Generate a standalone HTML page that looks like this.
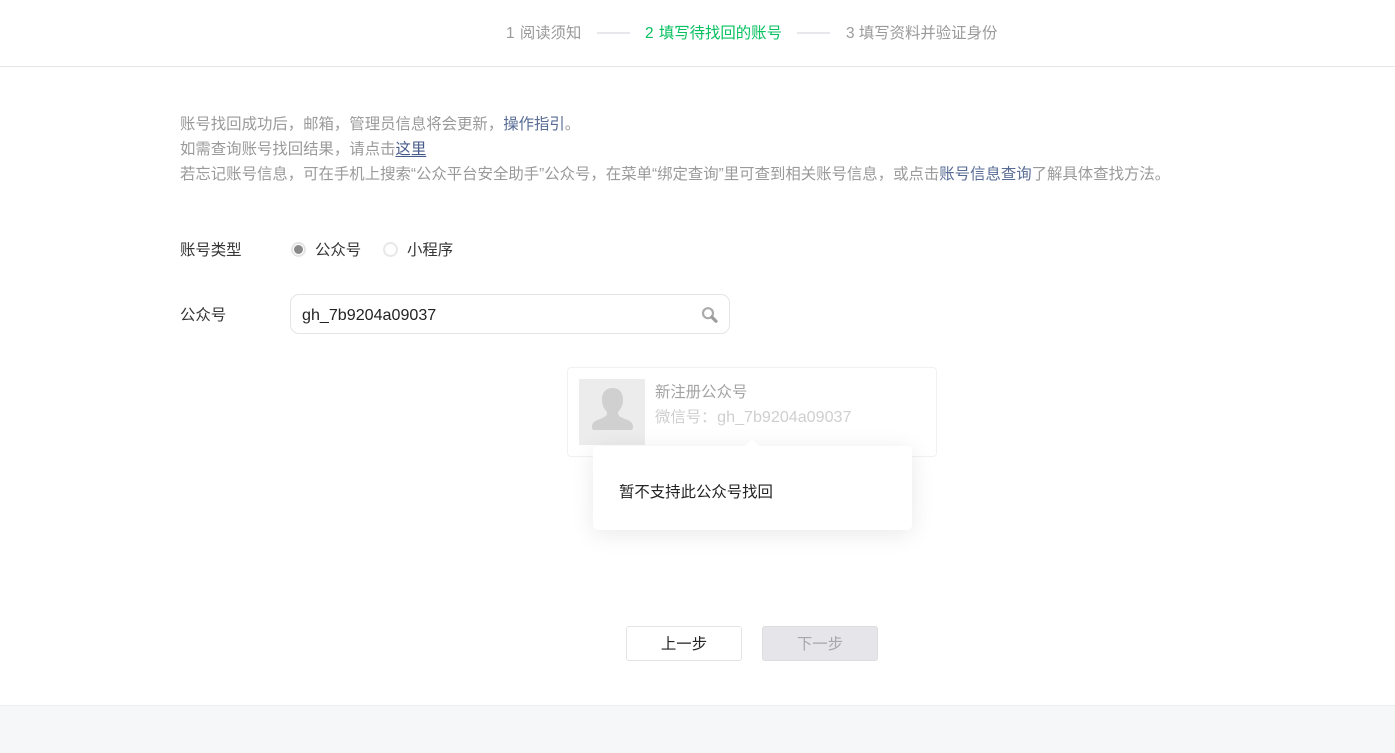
<!DOCTYPE html>
<html lang="zh-CN">
<head>
<meta charset="utf-8">
<title>账号找回</title>
<style>
html,body{margin:0;padding:0;background:#fff}
body{width:1395px;height:753px;position:relative;overflow:hidden;font-family:"Liberation Sans","Noto Sans CJK SC",sans-serif;font-size:15.4px;color:#353535}
.a{position:absolute;white-space:nowrap}
.t{line-height:25px;height:25px}
a{color:#576b95;text-decoration:none}
.g{color:#9a9a9a}
</style>
</head>
<body>
<div class="a" style="left:0;top:66px;width:1395px;height:1px;background:#e7e7eb"></div>
<div class="a t" style="left:506px;top:21px;color:#9a9a9a;word-spacing:1px">1 阅读须知</div>
<div class="a" style="left:597px;top:32px;width:33px;height:2px;background:#e6e8eb"></div>
<div class="a t" style="left:645px;top:21px;color:#07c160;word-spacing:1px">2 填写待找回的账号</div>
<div class="a" style="left:797px;top:32px;width:33px;height:2px;background:#e6e8eb"></div>
<div class="a t" style="left:846px;top:21px;color:#9a9a9a">3 填写资料并验证身份</div>

<div class="a t g" style="left:180px;top:112px">账号找回成功后，邮箱，管理员信息将会更新，<a>操作指引</a>。</div>
<div class="a t g" style="left:180px;top:137px">如需查询账号找回结果，请点击<a style="text-decoration:underline;text-underline-offset:2px;color:#465a8a">这里</a></div>
<div class="a t g" style="left:180px;top:162px">若忘记账号信息，可在手机上搜索“公众平台安全助手”公众号，在菜单“绑定查询”里可查到相关账号信息，或点击<a>账号信息查询</a>了解具体查找方法。</div>

<div class="a t" style="left:180px;top:238px">账号类型</div>
<div class="a" style="left:291px;top:242px;width:11px;height:11px;border:2px solid #e4e4e4;border-radius:50%"></div>
<div class="a" style="left:294px;top:245px;width:9px;height:9px;background:#8a8a8a;border-radius:50%"></div>
<div class="a t" style="left:315px;top:238px">公众号</div>
<div class="a" style="left:383px;top:242px;width:11px;height:11px;border:2px solid #e8e8e8;border-radius:50%"></div>
<div class="a t" style="left:407px;top:238px">小程序</div>

<div class="a t" style="left:180px;top:303px">公众号</div>
<div class="a" style="left:290px;top:294px;width:438px;height:38px;border:1px solid #e4e4e7;border-radius:9px"></div>
<div class="a t" style="left:302px;top:303px;font-size:16.1px;color:#222">gh_7b9204a09037</div>
<svg class="a" style="left:700px;top:305px" width="20" height="20" viewBox="0 0 20 20">
<circle cx="8" cy="8.200" r="5" fill="none" stroke="#ababab" stroke-width="2.200"/>
<path d="M12 12.200 L16 16.200" stroke="#9c9c9c" stroke-width="3.200" stroke-linecap="round"/>
</svg>

<div class="a" style="left:567px;top:367px;width:368px;height:88px;border:1px solid #f1f1f3;border-radius:4px"></div>
<div class="a" style="left:579px;top:379px;width:66px;height:66px;background:#ececec"></div>
<svg class="a" style="left:579px;top:379px" width="66" height="66" viewBox="0 0 66 66">
<path d="M33.500 9 C26.500 9 23 14 23 20.500 C23 26 25 30 28 33 C28.500 36.500 26 38 21 40 C15.500 42 13 43.500 13 48 C13 50.500 14 51 16 51 L51 51 C53 51 54 50.500 54 48 C54 43.500 51.500 42 46 40 C41 38 38.500 36.500 39 33 C42 30 44 26 44 20.500 C44 14 40.500 9 33.500 9 Z" fill="#d0d0d0"/>
</svg>
<div class="a t" style="left:655px;top:380px;color:#a3a3a3">新注册公众号</div>
<div class="a t" style="left:655px;top:405px;color:#cfcfcf">微信号：<span style="font-size:16.1px;padding-left:.6px">gh_7b9204a09037</span></div>

<div class="a" style="left:593px;top:446px;width:319px;height:84px;background:#fff;border-radius:5px;box-shadow:0 4px 24px rgba(0,0,0,.09)"></div>
<svg class="a" style="left:743px;top:438px" width="18" height="9" viewBox="0 0 18 9"><path d="M1 9 L9 1 L17 9 Z" fill="#fff"/></svg>
<div class="a t" style="left:619px;top:480px;color:#222">暂不支持此公众号找回</div>

<div class="a" style="left:626px;top:626px;width:114px;height:33px;border:1px solid #e4e4e7;border-radius:3px;background:#fff;text-align:center;line-height:35px;color:#222;white-space:nowrap">上一步</div>
<div class="a" style="left:762px;top:626px;width:114px;height:33px;border:1px solid #dcdce1;border-radius:3px;background:#e5e5ea;text-align:center;line-height:35px;color:#a8a8a8;white-space:nowrap">下一步</div>

<div class="a" style="left:0;top:705px;width:1395px;height:48px;background:#f6f7f9;border-top:1px solid #eeeff2;box-sizing:border-box"></div>
</body>
</html>
